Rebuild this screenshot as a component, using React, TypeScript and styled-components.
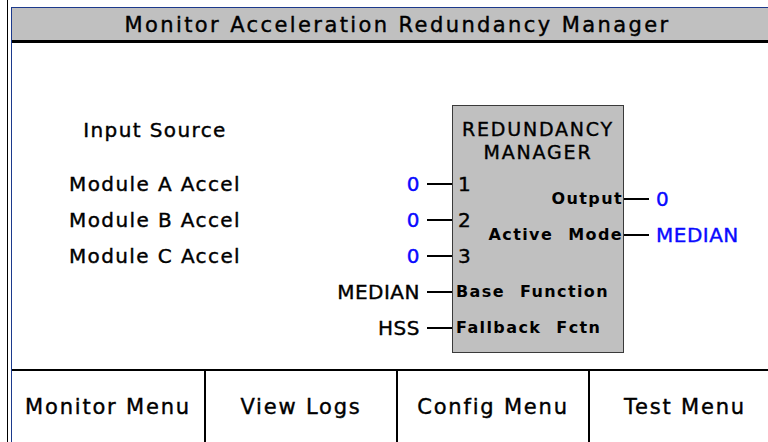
import React from "react";
import styled, { createGlobalStyle, css } from "styled-components";

const GlobalStyle = createGlobalStyle`
  html, body {
    margin: 0;
    padding: 0;
    background: #fff;
    overflow: hidden;
  }
  body {
    font-family: "DejaVu Sans", "Liberation Sans", sans-serif;
    color: #000;
  }
`;

const BLUE = "#0a0aff";

// the panel font is a heavy bitmap face, so thicken the regular weight a little
const heavy = css`
  -webkit-text-stroke: 0.4px currentColor;
`;

const Frame = styled.div`
  height: 442px;
  margin-left: 7px;
  padding: 7px 0 0 3px;
  border-left: 1px solid #000;
  box-sizing: border-box;
  overflow: hidden;
`;

const Panel = styled.div`
  width: 780px;
  height: 435px;
  display: flex;
  flex-direction: column;
  border-top: 1px solid #1c3a8c;
  border-left: 1px solid #1c3a8c;
  box-sizing: border-box;
`;

const TitleBar = styled.div`
  height: 35px;
  background: #c0c0c0;
  border-bottom: 3px solid #000;
  display: flex;
  align-items: center;
  justify-content: center;
  font-size: 21px;
  letter-spacing: 2.4px;
  padding: 2px 8px 0 0;
  box-sizing: border-box;
  ${heavy}
`;

const Body = styled.div`
  height: 326px;
  box-sizing: border-box;
  padding-top: 62px;
  display: grid;
  grid-template-columns: 28px 230px 182px 172px 1fr;
  grid-template-rows: 70px repeat(9, 18px) 16px;
  align-items: center;
`;

const SourceLabel = styled.div<{ row: number; top?: number }>`
  grid-column: 2;
  grid-row: ${(p) => p.row};
  justify-self: center;
  align-self: ${(p) => (p.top !== undefined ? "start" : "center")};
  margin-top: ${(p) => (p.top !== undefined ? `${p.top}px` : "0")};
  font-size: 20px;
  line-height: 22px;
  letter-spacing: 1.4px;
  white-space: nowrap;
  ${heavy}
`;

const InputPin = styled.div<{ row: number }>`
  grid-column: 3;
  grid-row: ${(p) => p.row};
  justify-self: end;
  display: flex;
  align-items: center;
  gap: 7px;
`;

const OutputPin = styled.div<{ row: number }>`
  grid-column: 5;
  grid-row: ${(p) => p.row};
  justify-self: start;
  display: flex;
  align-items: center;
  gap: 7px;
  margin-top: -6px;
`;

const PinValue = styled.span<{ blue?: boolean }>`
  font-size: 20px;
  line-height: 22px;
  letter-spacing: 0.5px;
  color: ${(p) => (p.blue ? BLUE : "#000")};
  ${heavy}
`;

const Wire = styled.span`
  display: block;
  width: 25px;
  height: 2px;
  background: #000;
`;

const Block = styled.div`
  grid-column: 4;
  grid-row: 1 / -1;
  align-self: stretch;
  background: #c0c0c0;
  border: 1px solid #3a3a3a;
`;

const BlockTitle = styled.div`
  grid-column: 4;
  grid-row: 1;
  align-self: start;
  margin-top: 13px;
  text-align: center;
  font-size: 19px;
  line-height: 23px;
  letter-spacing: 1.8px;
  ${heavy}
`;

const PinNumber = styled.div<{ row: number }>`
  grid-column: 4;
  grid-row: ${(p) => p.row};
  justify-self: start;
  padding-left: 6px;
  font-size: 20px;
  line-height: 22px;
  ${heavy}
`;

const PinName = styled.div<{ row: number; right?: boolean }>`
  grid-column: 4;
  grid-row: ${(p) => p.row};
  justify-self: ${(p) => (p.right ? "end" : "start")};
  padding: ${(p) => (p.right ? "0 1px 0 0" : "0 0 0 4px")};
  margin-top: ${(p) => (p.right ? "-6px" : "0")};
  font-size: 16px;
  font-weight: bold;
  line-height: 20px;
  letter-spacing: 1.4px;
  word-spacing: 8px;
  white-space: nowrap;
`;

const ButtonRow = styled.div`
  flex: 1;
  display: grid;
  grid-template-columns: repeat(4, 192px);
  border-top: 2px solid #000;
`;

const MenuButton = styled.div`
  display: flex;
  align-items: center;
  justify-content: center;
  font-size: 21px;
  letter-spacing: 1.8px;
  ${heavy}
  & + & {
    border-left: 2px solid #000;
  }
`;

const modules = ["Module A Accel", "Module B Accel", "Module C Accel"];
const inputs = [
  { row: 2, value: "0", pin: "1" },
  { row: 4, value: "0", pin: "2" },
  { row: 6, value: "0", pin: "3" },
];
const menus = ["Monitor Menu", "View Logs", "Config Menu", "Test Menu"];

export default function App() {
  return (
    <>
      <GlobalStyle />
      <Frame>
        <Panel>
          <TitleBar>Monitor Acceleration Redundancy Manager</TitleBar>
          <Body>
            <SourceLabel row={1} top={14}>
              Input Source
            </SourceLabel>
            {modules.map((m, i) => (
              <SourceLabel key={m} row={2 + i * 2}>
                {m}
              </SourceLabel>
            ))}

            {inputs.map((p) => (
              <InputPin key={p.pin} row={p.row}>
                <PinValue blue>{p.value}</PinValue>
                <Wire />
              </InputPin>
            ))}
            <InputPin row={8}>
              <PinValue>MEDIAN</PinValue>
              <Wire />
            </InputPin>
            <InputPin row={10}>
              <PinValue>HSS</PinValue>
              <Wire />
            </InputPin>

            <Block />
            <BlockTitle>
              REDUNDANCY
              <br />
              MANAGER
            </BlockTitle>
            {inputs.map((p) => (
              <PinNumber key={p.pin} row={p.row}>
                {p.pin}
              </PinNumber>
            ))}
            <PinName row={8}>Base Function</PinName>
            <PinName row={10}>Fallback Fctn</PinName>
            <PinName row={3} right>
              Output
            </PinName>
            <PinName row={5} right>
              Active Mode
            </PinName>

            <OutputPin row={3}>
              <Wire />
              <PinValue blue>0</PinValue>
            </OutputPin>
            <OutputPin row={5}>
              <Wire />
              <PinValue blue>MEDIAN</PinValue>
            </OutputPin>
          </Body>
          <ButtonRow>
            {menus.map((m) => (
              <MenuButton key={m}>{m}</MenuButton>
            ))}
          </ButtonRow>
        </Panel>
      </Frame>
    </>
  );
}
